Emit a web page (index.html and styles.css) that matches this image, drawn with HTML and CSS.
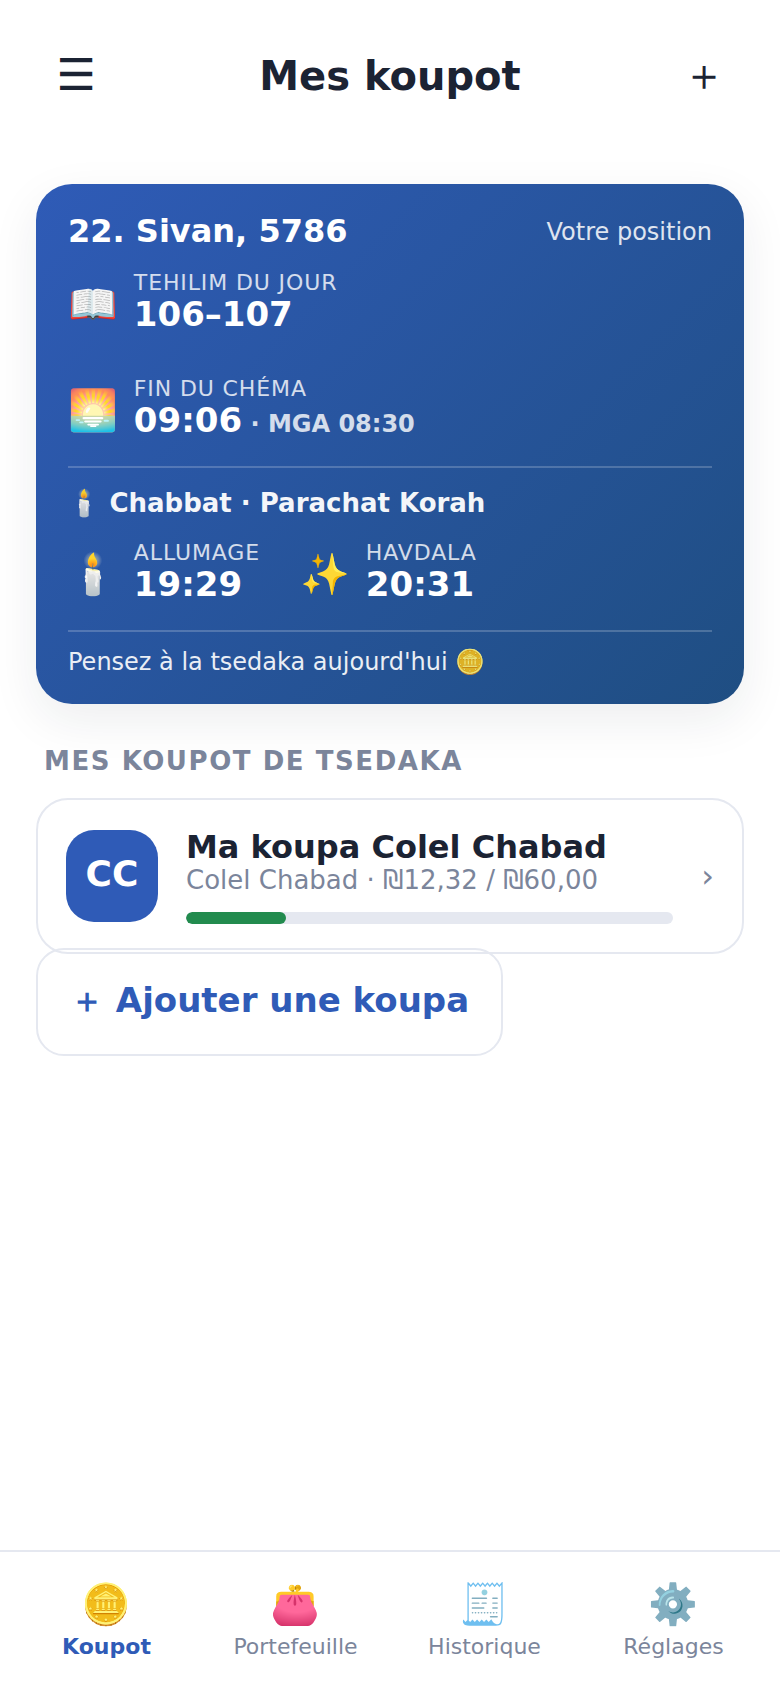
FILE: index.html
```html
<!DOCTYPE html>
<html lang="fr">
<head>
    <meta charset="UTF-8">
    <meta name="viewport" content="width=device-width, initial-scale=1.0">
    <title>Mes koupot</title>
    <link rel="stylesheet" href="styles.css">
</head>
<body>
    <header class="topbar">
        <button type="button" class="icon-btn" aria-label="Menu">☰</button>
        <h1>Mes koupot</h1>
        <button type="button" class="icon-btn" aria-label="Ajouter">＋</button>
    </header>

    <main>
        <section class="day-card">
            <div class="day-head">
                <h2 class="day-date">22. Sivan, 5786</h2>
                <span class="day-place">Votre position</span>
            </div>
            <div class="day-rows">
                <div class="item">
                    <span class="item-icon">📖</span>
                    <div>
                        <div class="item-label">Tehilim du jour</div>
                        <div class="item-value">106–107</div>
                    </div>
                </div>
                <div class="item">
                    <span class="item-icon">🌅</span>
                    <div>
                        <div class="item-label">Fin du Chéma</div>
                        <div class="item-value">09:06<small> · MGA 08:30</small></div>
                    </div>
                </div>
            </div>
            <div class="shabbat">
                <h3 class="shabbat-title">🕯️ Chabbat · Parachat Korah</h3>
                <div class="shabbat-times">
                    <div class="item">
                        <span class="item-icon">🕯️</span>
                        <div>
                            <div class="item-label">Allumage</div>
                            <div class="item-value">19:29</div>
                        </div>
                    </div>
                    <div class="item">
                        <span class="item-icon">✨</span>
                        <div>
                            <div class="item-label">Havdala</div>
                            <div class="item-value">20:31</div>
                        </div>
                    </div>
                </div>
            </div>
            <p class="day-note">Pensez à la tsedaka aujourd'hui 🪙</p>
        </section>

        <h2 class="section-title">Mes koupot de tsedaka</h2>
        <a class="koupa" href="#koupa">
            <span class="avatar">CC</span>
            <div class="koupa-body">
                <div class="koupa-name">Ma koupa Colel Chabad</div>
                <div class="koupa-sub">Colel Chabad · ₪12,32 / ₪60,00</div>
                <div class="progress">
                    <div class="progress-fill" style="width: 20.5%"></div>
                </div>
            </div>
            <span class="chevron">›</span>
        </a>
        <div class="add-row">
            <a class="add-koupa" href="#ajouter">＋ Ajouter une koupa</a>
        </div>
    </main>

    <nav class="tabbar">
        <a class="tab active" href="#koupot"><span class="tab-icon">🪙</span>Koupot</a>
        <a class="tab" href="#portefeuille"><span class="tab-icon">👛</span>Portefeuille</a>
        <a class="tab" href="#historique"><span class="tab-icon">🧾</span>Historique</a>
        <a class="tab" href="#reglages"><span class="tab-icon">⚙️</span>Réglages</a>
    </nav>
</body>
</html>
```
FILE: styles.css
```css
:root {
    --blue: #2f5bb7;
    --ink: #1b2333;
    --muted: #7b859b;
    --line: #e5e8f0;
    --green: #228b4e;
}

* {
    box-sizing: border-box;
}

body {
    margin: 0;
    min-height: 100vh;
    display: flex;
    flex-direction: column;
    background: #fff;
    color: var(--ink);
    font-family: "DejaVu Sans", "Noto Color Emoji", sans-serif;
    font-size: 26px;
}

h1, h2, h3, p {
    margin: 0;
}

a {
    color: inherit;
    text-decoration: none;
}

/* header */
.topbar {
    display: flex;
    align-items: center;
    justify-content: space-between;
    padding: 36px 36px 28px;
}

.topbar h1 {
    font-size: 40px;
    line-height: 48px;
}

.icon-btn {
    width: 80px;
    height: 80px;
    padding: 0 0 2px;
    border: 0;
    background: none;
    color: inherit;
    font-family: inherit;
    font-size: 44px;
    line-height: 52px;
    cursor: pointer;
}

main {
    flex: 1;
    padding: 40px 36px;
}

/* card of the day */
.day-card {
    padding: 28px 32px;
    border-radius: 36px;
    background: linear-gradient(135deg, #2f5bb7, #1f4e82);
    box-shadow: 0 16px 48px rgba(27, 35, 51, 0.08);
    color: #fff;
}

.day-head {
    display: flex;
    align-items: center;
    justify-content: space-between;
    margin-bottom: 18px;
}

.day-date {
    font-size: 32px;
    line-height: 38px;
}

.day-place {
    padding-top: 2px;
    font-size: 24px;
    line-height: 28px;
    opacity: 0.85;
}

.day-rows {
    display: grid;
    gap: 42px;
}

.item {
    display: flex;
    align-items: flex-end;
    gap: 16px;
}

.item-icon {
    font-size: 40px;
    line-height: 56px;
}

.item-label {
    font-size: 22px;
    line-height: 30px;
    letter-spacing: 0.04em;
    text-transform: uppercase;
    opacity: 0.8;
}

.item-value {
    padding-bottom: 2px;
    font-size: 34px;
    line-height: 32px;
    font-weight: bold;
}

.item-value small {
    font-size: 24px;
    line-height: 24px;
    opacity: 0.8;
}

.shabbat {
    margin-top: 28px;
    padding: 20px 0 28px;
    border-top: 2px solid rgba(255, 255, 255, 0.2);
    border-bottom: 2px solid rgba(255, 255, 255, 0.2);
}

.shabbat-title {
    margin-bottom: 20px;
    font-size: 26px;
    line-height: 30px;
    opacity: 0.95;
}

.shabbat-times {
    display: flex;
    gap: 40px;
}

.day-note {
    margin-top: 16px;
    font-size: 24px;
    line-height: 28px;
    opacity: 0.9;
}

/* list of koupot */
.section-title {
    margin: 42px 8px 22px;
    color: var(--muted);
    font-size: 26px;
    line-height: 30px;
    letter-spacing: 0.06em;
    text-transform: uppercase;
}

.koupa {
    display: flex;
    align-items: center;
    gap: 28px;
    padding: 28px;
    border: 2px solid var(--line);
    border-radius: 32px;
    background: #fff;
}

.avatar {
    display: flex;
    align-items: center;
    justify-content: center;
    width: 92px;
    height: 92px;
    padding-bottom: 6px;
    border-radius: 28px;
    background: var(--blue);
    color: #fff;
    font-size: 36px;
    font-weight: bold;
}

.koupa-body {
    flex: 1;
}

.koupa-name {
    font-size: 32px;
    line-height: 38px;
    font-weight: bold;
}

.koupa-sub {
    color: var(--muted);
    font-size: 26px;
    line-height: 28px;
}

.progress {
    height: 12px;
    margin-top: 18px;
    border-radius: 6px;
    background: var(--line);
    overflow: hidden;
}

.progress-fill {
    height: 100%;
    border-radius: 6px;
    background: var(--green);
}

.chevron {
    color: var(--muted);
    font-size: 32px;
}

.add-row {
    margin-top: 22px;
    line-height: 48px;
    font-size: 34px;
}

.add-koupa {
    padding: 30px 32px 34px;
    border: 2px solid var(--line);
    border-radius: 28px;
    color: var(--blue);
    font-weight: bold;
}

/* bottom navigation */
.tabbar {
    display: grid;
    grid-template-columns: repeat(4, 1fr);
    padding: 28px 12px;
    border-top: 2px solid var(--line);
}

.tab {
    display: flex;
    flex-direction: column;
    align-items: center;
    gap: 6px;
    color: var(--muted);
    font-size: 22px;
    line-height: 26px;
}

.tab.active {
    color: var(--blue);
    font-weight: bold;
}

.tab-icon {
    font-size: 40px;
    font-weight: normal;
    line-height: 48px;
}
```
